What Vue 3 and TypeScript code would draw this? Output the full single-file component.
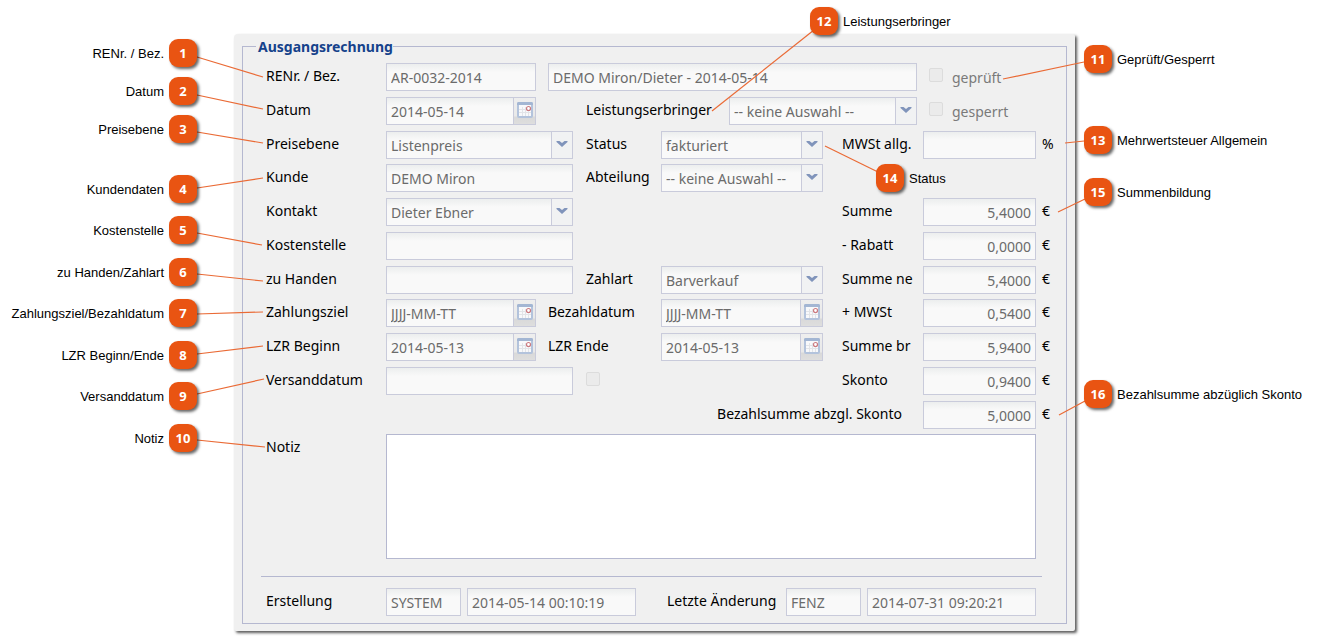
<script setup lang="ts">
interface Pin {
  n: number
  text: string
  x: number
  y: number
  side: 'left' | 'right'
  line: [number, number, number, number]
}

const pins: Pin[] = [
  { n: 1, text: 'RENr. / Bez.', x: 183, y: 53, side: 'left', line: [197, 57, 263, 77] },
  { n: 2, text: 'Datum', x: 183, y: 91, side: 'left', line: [197, 95, 263, 109] },
  { n: 3, text: 'Preisebene', x: 183, y: 129, side: 'left', line: [197, 132, 263, 143] },
  { n: 4, text: 'Kundendaten', x: 183, y: 189, side: 'left', line: [197, 188, 263, 178] },
  { n: 5, text: 'Kostenstelle', x: 183, y: 230, side: 'left', line: [197, 233, 262, 245] },
  { n: 6, text: 'zu Handen/Zahlart', x: 183, y: 272, side: 'left', line: [197, 274, 263, 281] },
  { n: 7, text: 'Zahlungsziel/Bezahldatum', x: 183, y: 313, side: 'left', line: [197, 314, 263, 312] },
  { n: 8, text: 'LZR Beginn/Ende', x: 183, y: 355, side: 'left', line: [197, 354, 263, 346] },
  { n: 9, text: 'Versanddatum', x: 183, y: 396, side: 'left', line: [197, 394, 264, 379] },
  { n: 10, text: 'Notiz', x: 183, y: 438, side: 'left', line: [197, 440, 265, 447] },
  { n: 11, text: 'Geprüft/Gesperrt', x: 1098, y: 59, side: 'right', line: [1084, 62, 1003, 79] },
  { n: 12, text: 'Leistungserbringer', x: 824, y: 21, side: 'right', line: [814, 30, 712, 111] },
  { n: 13, text: 'Mehrwertsteuer Allgemein', x: 1098, y: 140, side: 'right', line: [1084, 141, 1065, 143] },
  { n: 14, text: 'Status', x: 890, y: 178, side: 'right', line: [878, 172, 825, 146] },
  { n: 15, text: 'Summenbildung', x: 1098, y: 192, side: 'right', line: [1085, 199, 1058, 212] },
  { n: 16, text: 'Bezahlsumme abzüglich Skonto', x: 1098, y: 394, side: 'right', line: [1085, 401, 1059, 415] },
]

const STAGE = 1320
const place = (p: Pin) => ({ left: `${(p.x / STAGE) * 100}%`, top: `${p.y}px` })

interface Field {
  id: string
  label?: string
  kind: 'text' | 'date' | 'select' | 'money'
  value: string
  row: number
  lab: string
  box: string
  unit?: string
}

const fields: Field[] = [
  { id: 'renr', label: 'RENr. / Bez.', kind: 'text', value: 'AR-0032-2014', row: 1, lab: 'l-a', box: 'b-short' },
  { id: 'bez', kind: 'text', value: 'DEMO Miron/Dieter - 2014-05-14', row: 1, lab: '', box: 'b-title' },
  { id: 'datum', label: 'Datum', kind: 'date', value: '2014-05-14', row: 2, lab: 'l-a', box: 'b-short' },
  { id: 'leistung', label: 'Leistungserbringer', kind: 'select', value: '-- keine Auswahl --', row: 2, lab: 'l-b', box: 'b-provider' },
  { id: 'preis', label: 'Preisebene', kind: 'select', value: 'Listenpreis', row: 3, lab: 'l-a', box: 'b-long' },
  { id: 'status', label: 'Status', kind: 'select', value: 'fakturiert', row: 3, lab: 'l-b', box: 'b-mid' },
  { id: 'mwst', label: 'MWSt allg.', kind: 'money', value: '', row: 3, lab: 'l-c', box: 'b-sum', unit: '%' },
  { id: 'kunde', label: 'Kunde', kind: 'text', value: 'DEMO Miron', row: 4, lab: 'l-a', box: 'b-long' },
  { id: 'abt', label: 'Abteilung', kind: 'select', value: '-- keine Auswahl --', row: 4, lab: 'l-b', box: 'b-mid' },
  { id: 'kontakt', label: 'Kontakt', kind: 'select', value: 'Dieter Ebner', row: 5, lab: 'l-a', box: 'b-long' },
  { id: 'summe', label: 'Summe', kind: 'money', value: '5,4000', row: 5, lab: 'l-c', box: 'b-sum', unit: '€' },
  { id: 'kst', label: 'Kostenstelle', kind: 'text', value: '', row: 6, lab: 'l-a', box: 'b-long' },
  { id: 'rabatt', label: '- Rabatt', kind: 'money', value: '0,0000', row: 6, lab: 'l-c', box: 'b-sum', unit: '€' },
  { id: 'handen', label: 'zu Handen', kind: 'text', value: '', row: 7, lab: 'l-a', box: 'b-long' },
  { id: 'zahlart', label: 'Zahlart', kind: 'select', value: 'Barverkauf', row: 7, lab: 'l-b', box: 'b-mid' },
  { id: 'netto', label: 'Summe ne', kind: 'money', value: '5,4000', row: 7, lab: 'l-c', box: 'b-sum', unit: '€' },
  { id: 'ziel', label: 'Zahlungsziel', kind: 'date', value: 'JJJJ-MM-TT', row: 8, lab: 'l-a', box: 'b-short' },
  { id: 'bezahlt', label: 'Bezahldatum', kind: 'date', value: 'JJJJ-MM-TT', row: 8, lab: 'l-d', box: 'b-mid' },
  { id: 'plusmwst', label: '+ MWSt', kind: 'money', value: '0,5400', row: 8, lab: 'l-c', box: 'b-sum', unit: '€' },
  { id: 'lzrb', label: 'LZR Beginn', kind: 'date', value: '2014-05-13', row: 9, lab: 'l-a', box: 'b-short' },
  { id: 'lzre', label: 'LZR Ende', kind: 'date', value: '2014-05-13', row: 9, lab: 'l-d', box: 'b-mid' },
  { id: 'brutto', label: 'Summe br', kind: 'money', value: '5,9400', row: 9, lab: 'l-c', box: 'b-sum', unit: '€' },
  { id: 'versand', label: 'Versanddatum', kind: 'text', value: '', row: 10, lab: 'l-a', box: 'b-long' },
  { id: 'skonto', label: 'Skonto', kind: 'money', value: '0,9400', row: 10, lab: 'l-c', box: 'b-sum', unit: '€' },
  { id: 'total', label: 'Bezahlsumme abzgl. Skonto', kind: 'money', value: '5,0000', row: 11, lab: 'l-total', box: 'b-sum', unit: '€' },
]
</script>

<template>
  <main class="stage">
    <section class="panel">
      <fieldset class="group">
        <legend>Ausgangsrechnung</legend>
        <div class="form">
          <template v-for="f in fields" :key="f.id">
            <label v-if="f.label" :for="f.id" class="lab" :class="[f.lab, 'r' + f.row]">{{ f.label }}</label>
            <div class="box" :class="[f.box, 'r' + f.row]">
              <select v-if="f.kind === 'select'" :id="f.id" disabled>
                <option>{{ f.value }}</option>
              </select>
              <input
                v-else
                :id="f.id"
                type="text"
                :value="f.value"
                :class="{ money: f.kind === 'money' }"
                :aria-label="f.label ? undefined : 'Bezeichnung'"
                readonly
              />
              <span v-if="f.kind === 'select'" class="trigger arrow" aria-hidden="true">
                <svg width="12" height="8" viewBox="0 0 12 8">
                  <path d="M0.5 1H3.5L6 3L8.5 1H11.500V2L6 7L0.5 2Z" fill="#8094bb" />
                </svg>
              </span>
              <button v-if="f.kind === 'date'" type="button" class="trigger date" :aria-label="'Kalender ' + f.label">
                <svg width="16" height="16" viewBox="0 0 16 16">
                  <rect x="1" y="1" width="14" height="14" rx="1" fill="#f8f9fb" stroke="#b3c3dc" stroke-width="2" />
                  <path d="M0 1.5Q0 0 1.5 0H14.5Q16 0 16 1.5V3H0Z" fill="#a3b6d3" />
                  <path d="M5.500 5V14M8.500 5V14M11.500 9V14M2 7.500H9M2 10.5H14" stroke="#e2e4e8" fill="none" />
                  <circle cx="11.500" cy="6.500" r="2" fill="#fff" stroke="#cb7a80" stroke-width="1.200" />
                </svg>
              </button>
            </div>
            <span v-if="f.unit" class="lab unit" :class="'r' + f.row">{{ f.unit }}</span>
          </template>

          <label class="check c-right r1"><input type="checkbox" disabled />geprüft</label>
          <label class="check c-right r2"><input type="checkbox" disabled />gesperrt</label>
          <label class="check c-mid r10"><input type="checkbox" disabled aria-label="Versand erledigt" /></label>

          <label for="notiz" class="lab l-a r12">Notiz</label>
          <textarea id="notiz" class="r12" readonly></textarea>
        </div>

        <hr />

        <div class="foot">
          <label for="erst" class="lab f-a">Erstellung</label>
          <div class="box f-b"><input id="erst" type="text" value="SYSTEM" readonly /></div>
          <div class="box f-c"><input type="text" value="2014-05-14 00:10:19" aria-label="Erstellt am" readonly /></div>
          <label for="aend" class="lab f-d">Letzte Änderung</label>
          <div class="box f-e"><input id="aend" type="text" value="FENZ" readonly /></div>
          <div class="box f-f"><input type="text" value="2014-07-31 09:20:21" aria-label="Geändert am" readonly /></div>
        </div>
      </fieldset>
    </section>

    <svg class="lines" viewBox="0 0 1320 640" preserveAspectRatio="none" aria-hidden="true">
      <line
        v-for="p in pins"
        :key="p.n"
        :x1="p.line[0]"
        :y1="p.line[1]"
        :x2="p.line[2]"
        :y2="p.line[3]"
        stroke="#ea6a35"
        stroke-width="1.200"
      />
    </svg>

    <div v-for="p in pins" :key="p.n" class="pin" :class="p.side" :style="place(p)">
      <b>{{ p.n }}</b>
      <span>{{ p.text }}</span>
    </div>
  </main>
</template>

<style>
body {
  margin: 0;
  background: #fff;
}
</style>

<style scoped>
.stage {
  position: relative;
  display: grid;
  grid-template-columns: 234fr 841fr 245fr;
  padding: 34px 0 9px;
  overflow: hidden;
  font-family: "Noto Sans", "Open Sans", sans-serif;
  font-size: 14px;
  color: #000;
}
.panel {
  grid-column: 2;
  min-width: 0;
  padding: 0 8px 7px;
  background: #f0f0f0;
  border-radius: 4px 2px 2px 2px;
  box-shadow: 2px 2px 3px rgba(0, 0, 0, 0.65);
}
.group {
  min-width: 0;
  margin: 0;
  padding: 0 2px 7px 18px;
  border: 1px solid #b5b8d0;
}
legend {
  margin-left: -5px;
  padding: 1px 0 0 2px;
  line-height: 23px;
  font-size: 14px;
  font-weight: 700;
  color: #15428b;
}
.form {
  display: grid;
  grid-template-columns:
    minmax(0, 120fr) minmax(0, 150fr) minmax(0, 12fr) minmax(0, 25fr) minmax(0, 13fr) minmax(0, 75fr)
    minmax(0, 68fr) minmax(0, 94fr) minmax(0, 19fr) minmax(0, 75fr) minmax(0, 6fr) minmax(0, 113fr) minmax(0, 28fr);
  grid-template-rows: 34px 34px 33px 34px 34px 34px 33px 34px 34px 34px 33px auto;
  align-items: start;
  padding: 5px 0 0 5px;
}
.r1 { grid-row: 1; }
.r2 { grid-row: 2; }
.r3 { grid-row: 3; }
.r4 { grid-row: 4; }
.r5 { grid-row: 5; }
.r6 { grid-row: 6; }
.r7 { grid-row: 7; }
.r8 { grid-row: 8; }
.r9 { grid-row: 9; }
.r10 { grid-row: 10; }
.r11 { grid-row: 11; }
.r12 { grid-row: 12; }
.lab {
  line-height: 25px;
  white-space: nowrap;
}
.l-a { grid-column: 1; }
.l-b { grid-column: 6 / 9; }
.l-c { grid-column: 10; }
.l-d { grid-column: 4 / 7; }
.l-total {
  grid-column: 6 / 12;
  justify-self: end;
  padding-right: 21px;
}
.unit {
  grid-column: 13;
  padding-left: 6px;
}
.b-short { grid-column: 2; }
.b-long { grid-column: 2 / 5; }
.b-title { grid-column: 4 / 11; }
.b-provider { grid-column: 8 / 11; }
.b-mid { grid-column: 7 / 9; }
.b-sum { grid-column: 12; }
.box {
  display: flex;
  box-sizing: border-box;
  height: 28px;
  min-width: 0;
  border: 1px solid #c9cbdb;
  background: linear-gradient(#eceeee, #f9f9f9 8px);
}
.b-long { grid-column-end: 5; }
input[type='text'],
select {
  flex: 1;
  width: 100%;
  min-width: 0;
  margin: 0;
  padding: 1px 4px 0;
  border: 0;
  border-radius: 0;
  outline: 0;
  appearance: none;
  background: transparent;
  font: inherit;
  color: #6b6b6b;
  opacity: 1;
}
.money {
  text-align: right;
}
.trigger {
  display: flex;
  flex: none;
  box-sizing: border-box;
  width: 21px;
  padding: 0;
  border: 0;
  border-left: 1px solid #c9cbdb;
  justify-content: center;
}
.arrow {
  align-items: center;
  padding-bottom: 3px;
  background: #f1f2f3;
}
.date {
  align-items: flex-start;
  width: 22px;
  padding-top: 4px;
  background: linear-gradient(#eeeeee, #e9e9e9 18px, #d9d9d9 19px, #dedede);
}
.check {
  display: flex;
  align-items: center;
  height: 28px;
  color: #7a7a7a;
}
.check input {
  flex: none;
  width: 14px;
  height: 14px;
  margin: 0 9px 4px 0;
  appearance: none;
  border: 1px solid #dcdcdc;
  border-radius: 2px;
  background: #ebebeb;
}
.c-right {
  grid-column: 12 / 14;
  padding-left: 6px;
}
.c-mid { grid-column: 6; }
textarea {
  grid-column: 2 / 13;
  box-sizing: border-box;
  width: 100%;
  height: 125px;
  border: 1px solid #b5b8d0;
  outline: 0;
  resize: none;
  background: #fff;
  font: inherit;
}
hr {
  height: 1px;
  margin: 17px 22px 0 0;
  border: 0;
  background: #b5b8d0;
}
.foot {
  display: grid;
  grid-template-columns:
    minmax(0, 120fr) minmax(0, 75fr) minmax(0, 6fr) minmax(0, 169fr) minmax(0, 31fr)
    minmax(0, 119fr) minmax(0, 75fr) minmax(0, 6fr) minmax(0, 169fr);
  padding: 11px 28px 0 5px;
}
.f-a { grid-column: 1; }
.f-b { grid-column: 2; }
.f-c { grid-column: 4; }
.f-d { grid-column: 6; }
.f-e { grid-column: 7; }
.f-f { grid-column: 9; }
.lines {
  position: absolute;
  left: 0;
  top: 0;
  width: 100%;
  height: 640px;
  pointer-events: none;
}
.pin {
  position: absolute;
  display: flex;
  width: 28px;
  height: 28px;
  margin: -14px 0 0 -14px;
  align-items: center;
  gap: 5px;
  font: 13px "Liberation Sans", Arial, sans-serif;
  white-space: nowrap;
}
.pin.left {
  flex-direction: row-reverse;
}
.pin b {
  flex: none;
  width: 28px;
  height: 28px;
  border-radius: 9px;
  background: #e95412;
  box-shadow: 2px 2px 3px rgba(0, 0, 0, 0.6);
  line-height: 28px;
  text-align: center;
  font-size: 13px;
  font-family: "Noto Sans", sans-serif;
  color: #fff;
}
</style>
